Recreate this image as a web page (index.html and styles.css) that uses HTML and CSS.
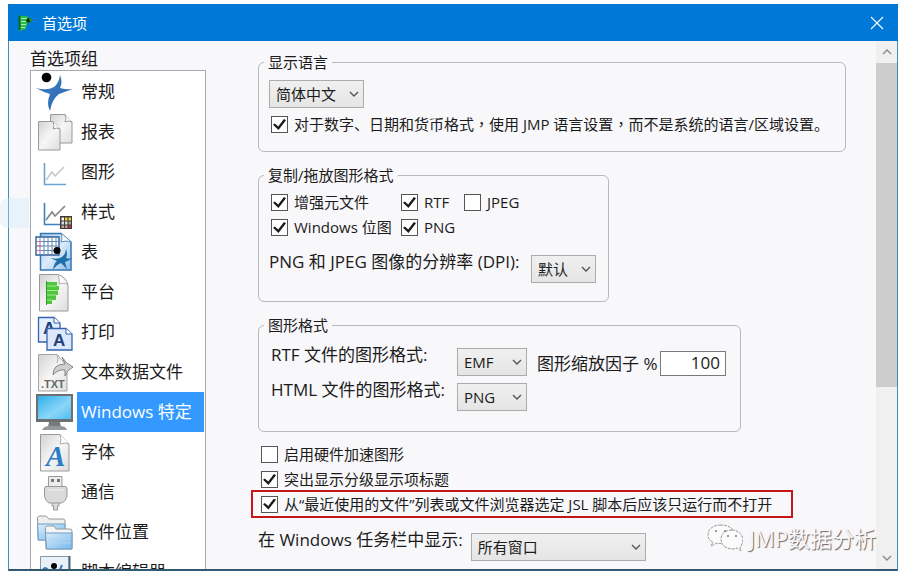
FILE: index.html
```html
<!DOCTYPE html>
<html lang="zh-CN">
<head>
<meta charset="utf-8">
<title>首选项</title>
<link rel="stylesheet" href="styles.css">
</head>
<body>
<svg class="defs" aria-hidden="true">
  <defs>
    <linearGradient id="paper" x1="0" y1="0" x2="1" y2="1"><stop offset="0" stop-color="#d2d2d2"/><stop offset=".5" stop-color="#f6f6f6"/><stop offset="1" stop-color="#dedede"/></linearGradient>
    <linearGradient id="bluepaper" x1="0" y1="0" x2="1" y2="1"><stop offset="0" stop-color="#9fc6ec"/><stop offset=".5" stop-color="#dcecfb"/><stop offset="1" stop-color="#8dbbe6"/></linearGradient>
    <linearGradient id="screen" x1="0" y1="0" x2="1" y2="1"><stop offset="0" stop-color="#2fb0ea"/><stop offset=".6" stop-color="#8bd6f8"/><stop offset="1" stop-color="#4cbcf0"/></linearGradient>
    <linearGradient id="folder" x1="0" y1="0" x2="1" y2="1"><stop offset="0" stop-color="#d8edfc"/><stop offset="1" stop-color="#7ab8ea"/></linearGradient>
    <linearGradient id="fig" x1="0" y1="0" x2="1" y2="1"><stop offset="0" stop-color="#3f7fc6"/><stop offset="1" stop-color="#2c66b0"/></linearGradient>
  </defs>
</svg>
<div class="window">
  <header class="titlebar">
    <svg class="app-icon" viewBox="0 0 16 18" aria-hidden="true"><path d="M2 1.500L11 2.500V5L13 6V9L10 9.500V12L9 12.500V15L3 17L2 16Z" fill="#2fb84c"/><path d="M2.500 1.500V16" stroke="#0b6b22" stroke-width="2"/><path d="M4 4.500H10M4 7.500H9M4 10.500H9M4 13.500H8" stroke="#a5efac"/><circle cx="11.500" cy="6.500" r="2.200" fill="#06360f"/><path d="M12 4.500L15 3.500V7L13 8" fill="#1c8f38"/></svg>
    <h1 class="title">首选项</h1>
    <button class="close" type="button" aria-label="关闭"><svg viewBox="0 0 14 14"><path d="M1 1L13 13M13 1L1 13" fill="none" stroke="#fff" stroke-width="1.100"/></svg></button>
  </header>
  <div class="content">
    <nav class="sidebar" aria-labelledby="groups">
      <h2 class="groups-title" id="groups">首选项组</h2>
      <ul class="groups">
        <li><button class="group" type="button"><svg viewBox="0 0 40 40"><circle cx="12.500" cy="5.500" r="4.800"/><path d="M2 16Q13 19 20 15Q25 11 26 3Q29 10 26 16Q32 18 39 17Q30 20 25 22Q18 27 16 39Q12 32 16 22Q9 20 2 16Z" fill="url(#fig)"/></svg><span>常规</span></button></li>
        <li><button class="group" type="button"><svg viewBox="0 0 40 40"><g fill="url(#paper)" stroke="#999"><path d="M16.500 2.500H31L38 10V31H16.500Z"/><path d="M31 2.500Q33 7 31 10Q35 8 38 10" fill="#fff"/><path d="M4.500 9.500H19L26 17V38H4.500Z"/><path d="M19 9.500Q21 14 19 17Q23 15 26 17" fill="#fff"/></g></svg><span>报表</span></button></li>
        <li><button class="group" type="button"><svg viewBox="0 0 40 40"><path d="M12 28L18 20L21 24L30 15" fill="none" stroke="#c3c8cc" stroke-width="1.500"/><path d="M10.500 11V32.500H32" fill="none" stroke="#6ba3d2" stroke-width="1.600"/></svg><span>图形</span></button></li>
        <li><button class="group" type="button"><svg viewBox="0 0 40 40"><path d="M12 28L18 20L21 24L31 14" fill="none" stroke="#888" stroke-width="1.700"/><path d="M10.500 11V32.500H28" fill="none" stroke="#3c80bd" stroke-width="1.600"/><path d="M26 24H38V37H26Z" fill="#403b39"/><path d="M27.500 25.500h2.500v3h-2.500z" fill="#fff"/><path d="M31 25.500h2.500v3H31zM34.500 25.500H37v3h-2.500z" fill="#e5d443"/><path d="M27.500 29.500H30v3h-2.500zM31 29.500h2.500v3H31z" fill="#ddd"/><path d="M34.500 29.500H37v3h-2.500z" fill="#a2a978"/><path d="M27.500 33.500H30V36h-2.500zM31 33.500h2.500V36H31z" fill="#b7a6a8"/><path d="M34.500 33.500H37V36h-2.500z" fill="#c83246"/></svg><span>样式</span></button></li>
        <li><button class="group" type="button"><svg viewBox="0 0 40 40"><path d="M6.500 1.500H27L37 10V38H6.500Z" fill="url(#bluepaper)" stroke="#3676b4" stroke-width="1.500"/><path d="M27 1.500Q29 6 27 10Q32 8 37 10" fill="#fff" stroke="#5c91c2"/><path d="M2 5H25V23H2Z" fill="#fff" stroke="#2f5f95" stroke-width="1.400"/><path d="M6 6V22M10 6V22M14 6V22M18 6V22M22 6V22M3 9.500H24M3 14H24M3 18.500H24" stroke="#5d86b5"/><path d="M3 9.500H8M3 14H8M3 18.500H8" stroke="#e26a8a"/><circle cx="23" cy="18.500" r="3.500"/><path d="M16 26Q24 28 28 25Q32 22 32 17Q34 22 32 26Q36 27 39 26Q34 29 31 30L33 37L27 31Q22 33 19 38Q20 31 23 29Z" fill="#1c6fa8"/></svg><span>表</span></button></li>
        <li><button class="group" type="button"><svg viewBox="0 0 40 40"><path d="M5.500 2.500H24Q32 5 34 13V39H5.500Z" fill="url(#paper)" stroke="#999"/><path d="M24 2.500Q26 9 25 12Q31 10 34 13" fill="#fff" stroke="#aaa"/><path d="M12 10H23V14H25V18H24V23H22V28H18V32H12Z" fill="#4cc83a"/><path d="M12 14H23M12 18.500H24M12 23H22M12 28H18" stroke="#a6eb96"/><path d="M12.500 9V33" stroke="#319a2b"/></svg><span>平台</span></button></li>
        <li><button class="group" type="button"><svg viewBox="0 0 40 40"><path d="M4.500 5.500H20L26 11V30H4.500Z" fill="#e4eefc" stroke="#3563ad" stroke-width="1.300"/><path d="M20 5.500V11H26" fill="#fff" stroke="#3563ad"/><text x="9" y="22" class="glyph-a">A</text><path d="M13 16.500H32L38 22V38H13Z" fill="#dbe8fb" stroke="#3563ad" stroke-width="1.300"/><path d="M32 16.500V22H38" fill="#fff" stroke="#3563ad"/><text x="19" y="34" class="glyph-a">A</text></svg><span>打印</span></button></li>
        <li><button class="group" type="button"><svg viewBox="0 0 40 40"><path d="M4.500 2.500H23L33 14V39H4.500Z" fill="url(#paper)" stroke="#a5a5a5"/><path d="M23 2.500Q25 7 23 11" fill="none" stroke="#aaa"/><path d="M19 23Q19 12 31 12L28 5Q32 12 39 15Q33 18 31 24V18Q24 17 19 23Z" fill="#cfcfcf" stroke="#858585"/><text x="7" y="36" class="glyph-txt">.TXT</text></svg><span>文本数据文件</span></button></li>
        <li><button class="group selected" type="button" aria-current="true"><svg viewBox="0 0 40 40"><path d="M2 2H39V30H2Z" fill="#6c7073"/><path d="M4 4H37V27H4Z" fill="url(#screen)"/><path d="M15 30H26L27 35H14Z" fill="#777b7e"/><path d="M8 38Q10 34 15 34H26Q32 34 33 38Z" fill="#94989a"/></svg><span>Windows 特定</span></button></li>
        <li><button class="group" type="button"><svg viewBox="0 0 40 40"><path d="M6.500 2.500H26L35 12V39H6.500Z" fill="url(#paper)" stroke="#999"/><path d="M26 2.500Q28 8 26 12Q31 10 35 12" fill="#fff" stroke="#aaa"/><text x="12" y="34" class="glyph-font">A</text></svg><span>字体</span></button></li>
        <li><button class="group" type="button"><svg viewBox="0 0 40 40"><g fill="#dadada" stroke="#999"><path d="M14.500 4.500H28V15H14.500Z" fill="#ececec"/><path d="M18 29H25V34H23.500V38H19.500V34H18Z"/><path d="M12 14.500H31Q33 14.500 33 17V24Q32 29 28 31H15Q11 29 10.500 24V17Q10.500 14.500 12 14.500Z"/></g><path d="M17 7h3v3h-3zM23 7h3v3h-3z" fill="#777"/><path d="M13 18H30" stroke="#eee"/></svg><span>通信</span></button></li>
        <li><button class="group" type="button"><svg viewBox="0 0 40 40"><path d="M3.500 7V5.500Q4 4 6 4H12L15 7H29Q31 7 31 9V28H4Z" fill="#eceeef" stroke="#999"/><path d="M3.500 12H31V28H4.500Z" fill="url(#folder)" stroke="#6f9fc5"/><path d="M11.500 17V15.500Q12 14 14 14H20L22 17H36Q38 17 38 19V37H12Z" fill="#f3f4f5" stroke="#999"/><path d="M11.500 21H38V37H12.500Z" fill="url(#folder)" stroke="#6f9fc5"/><path d="M14 27H36M14 31H36" stroke="#afd6f4"/></svg><span>文件位置</span></button></li>
        <li><button class="group" type="button"><svg viewBox="0 0 40 40"><path d="M6.500 4.500H35V39H6.500Z" fill="#e8f0f8" stroke="#8b98a5"/><path d="M35.500 4V39" stroke="#47627c" stroke-width="2"/><circle cx="20" cy="14" r="3"/><path d="M9 18Q11 14 14 18M25 20L28 13" fill="none" stroke="#3c79bb" stroke-width="2"/></svg><span>脚本编辑器</span></button></li>
      </ul>
    </nav>
    <main class="panel">
      <fieldset class="box language">
        <legend>显示语言</legend>
        <div class="picker picker-lang">
          <select aria-label="显示语言"><option>简体中文</option></select>
          <svg viewBox="0 0 10 6"><path d="M1 1L5 5L9 1"/></svg>
        </div>
        <label class="check"><input type="checkbox" checked><span>对于数字、日期和货币格式<span class="comma" lang="zh-TW">，</span>使用 JMP 语言设置<span class="comma" lang="zh-TW">，</span>而不是系统的语言/区域设置。</span></label>
      </fieldset>

      <fieldset class="box copy">
        <legend>复制/拖放图形格式</legend>
        <div class="formats">
          <label class="check"><input type="checkbox" checked><span>增强元文件</span></label>
          <label class="check"><input type="checkbox" checked><span>RTF</span></label>
          <label class="check"><input type="checkbox"><span>JPEG</span></label>
          <label class="check"><input type="checkbox" checked><span>Windows 位图</span></label>
          <label class="check"><input type="checkbox" checked><span>PNG</span></label>
        </div>
        <div class="row dpi">
          <label for="dpi">PNG 和 JPEG 图像的分辨率 (DPI):</label>
          <div class="picker picker-dpi">
            <select id="dpi"><option>默认</option></select>
            <svg viewBox="0 0 10 6"><path d="M1 1L5 5L9 1"/></svg>
          </div>
        </div>
      </fieldset>

      <fieldset class="box graphics">
        <legend>图形格式</legend>
        <div class="graphic-grid">
          <label for="rtf">RTF 文件的图形格式:</label>
          <div class="picker">
            <select id="rtf"><option>EMF</option></select>
            <svg viewBox="0 0 10 6"><path d="M1 1L5 5L9 1"/></svg>
          </div>
          <div class="scale">
            <label for="scale">图形缩放因子 %</label>
            <input id="scale" type="text" value="100">
          </div>
          <label for="html">HTML 文件的图形格式:</label>
          <div class="picker">
            <select id="html"><option>PNG</option></select>
            <svg viewBox="0 0 10 6"><path d="M1 1L5 5L9 1"/></svg>
          </div>
        </div>
      </fieldset>

      <div class="options">
        <label class="check"><input type="checkbox"><span>启用硬件加速图形</span></label>
        <label class="check"><input type="checkbox" checked><span>突出显示分级显示项标题</span></label>
        <label class="check marked"><input type="checkbox" checked><span>从“最近使用的文件”列表或文件浏览器选定 JSL 脚本后应该只运行而不打开</span></label>
      </div>
      <div class="row taskbar">
        <label for="taskbar">在 Windows 任务栏中显示:</label>
        <div class="picker picker-task">
          <select id="taskbar"><option>所有窗口</option></select>
          <svg viewBox="0 0 10 6"><path d="M1 1L5 5L9 1"/></svg>
        </div>
      </div>
    </main>
    <div class="scrollbar">
      <button type="button" aria-label="向上滚动"><svg viewBox="0 0 10 6"><path d="M1 5L5 1L9 5"/></svg></button>
      <div class="track"><div class="thumb"></div></div>
      <button type="button" aria-label="向下滚动"><svg viewBox="0 0 10 6"><path d="M1 1L5 5L9 1"/></svg></button>
    </div>
  </div>
</div>
<div class="side-tab" aria-hidden="true"></div>
<div class="watermark">
  <svg viewBox="0 0 36 28" aria-hidden="true"><g fill="#fbfbfc" stroke="#999" stroke-width="1" stroke-dasharray="3 1"><path d="M14 1C6 1 1 5 1 11C1 14 3 17 6 18L4 22L10 19Q13 20 17 19C23 19 27 15 27 10C27 5 22 1 14 1Z"/><path d="M25 6C18 6 14 10 14 15C14 21 19 25 26 25L30 24L34 27L33 23C35 21 36 18 36 15C35 10 31 6 25 6Z"/></g><g fill="#777"><circle cx="9" cy="7" r="1"/><circle cx="18" cy="7" r="1"/><circle cx="21" cy="12" r="1"/><circle cx="29" cy="12" r="1"/></g></svg>
  <span>JMP数据分析</span>
</div>
</body>
</html>
```
FILE: styles.css
```css
* { box-sizing: border-box; }

body {
  margin: 0;
  height: 100vh;
  padding: 4px 6px 6px 8px;
  position: relative;
  overflow: hidden;
  background: #fff;
  color: #1b1b1b;
  font: 15px/18px "Open Sans", "Noto Sans CJK SC", sans-serif;
}

button, input, select { font: inherit; color: inherit; }

button {
  margin: 0;
  padding: 0;
  border: 0;
  background: none;
}

.defs { position: absolute; width: 0; height: 0; }

.window {
  height: 100%;
  display: flex;
  flex-direction: column;
  border: solid #3d8fb9;
  border-width: 0 1px 2px;
  border-bottom-color: #315a72;
  background: #f8f7fa;
}

.titlebar {
  flex: none;
  height: 37px;
  margin: 0 -1px;
  padding: 0 14px 0 9px;
  display: flex;
  align-items: center;
  background: #0078d7;
  color: #fff;
}

.app-icon { width: 16px; height: 18px; margin-right: 9px; }

.title {
  flex: 1;
  margin: 0;
  font-size: 15px;
  font-weight: 400;
}

.close svg { display: block; width: 14px; height: 14px; }

.content {
  flex: 1;
  min-height: 0;
  display: flex;
}

.sidebar {
  flex: none;
  width: 197px;
  padding: 6px 0 0 21px;
  display: flex;
  flex-direction: column;
  font-size: 17px;
  line-height: 23px;
}

.groups-title {
  margin: 0;
  font-size: 17px;
  font-weight: 400;
}

.groups {
  flex: 1;
  min-height: 0;
  margin: 0;
  padding: 1px 0 0;
  overflow: hidden;
  list-style: none;
  border: 1px solid #a9a9ac;
  border-bottom: 0;
  background: #fff;
}

.group {
  width: 100%;
  height: 40px;
  padding: 0 1px 0 3px;
  display: flex;
  gap: 3px;
  text-align: left;
}

.group svg { flex: none; width: 40px; height: 40px; fill: #000; }

.group span {
  flex: 1;
  padding-left: 4px;
  line-height: 39px;
}

.selected span { background: #3399ff; color: #fff; }

.glyph-a { font: bold 17px "Liberation Sans", sans-serif; fill: #243f78; }
.glyph-txt { font: bold 11px "Liberation Sans", sans-serif; fill: #666; }
.glyph-font { font: italic bold 29px "Liberation Serif", serif; fill: #2f7cc9; }

.panel {
  flex: 1;
  min-width: 0;
  padding: 12px 30px 0 52px;
  overflow: hidden;
}

.box {
  min-width: 0;
  margin: 0 0 14px;
  padding: 0 10px 0 5px;
  border: 1px solid #b9b9bc;
  border-radius: 6px;
}

.box legend { padding: 0 4px; }

.language { height: 99px; }
.copy { width: 351px; height: 136px; }
.graphics { width: 483px; height: 116px; }

.picker { position: relative; width: 70px; }

.picker select {
  display: block;
  width: 100%;
  height: 28px;
  padding: 0 6px;
  appearance: none;
  border: 1px solid #acacac;
  border-radius: 0;
  background: linear-gradient(#f0f0f0, #e5e5e5);
}

.picker svg {
  position: absolute;
  top: 11px;
  right: 5px;
  width: 10px;
  height: 6px;
  pointer-events: none;
}

.picker path, .scrollbar path { fill: none; stroke: #555; stroke-width: 1.4; }

.picker-lang { width: 95px; margin: 9px 0 4px 5px; }
.picker-dpi { width: 65px; }
.picker-task { width: 175px; }

.check {
  display: flex;
  align-items: center;
  gap: 6px;
  height: 25px;
  white-space: nowrap;
}

.check > span { padding-bottom: 1px; }

.check input {
  flex: none;
  width: 17px;
  height: 17px;
  margin: 0;
  display: grid;
  place-content: center;
  appearance: none;
  border: 1px solid #555;
  background: #fff;
}

.check input:checked::before {
  content: "";
  width: 13px;
  height: 11px;
  background: #1b1b1b;
  clip-path: polygon(0 52%, 14% 40%, 40% 68%, 84% 0, 100% 12%, 42% 100%);
}

.language .check { margin-left: 7px; }
.comma { font-family: "Noto Sans CJK TC", sans-serif; }

.formats {
  display: grid;
  grid-template-columns: 130px 63px auto;
  padding: 6px 0 0 7px;
}

.row {
  display: flex;
  align-items: flex-start;
  font-size: 17px;
  line-height: 23px;
  white-space: nowrap;
}

.row select { font-size: 15px; }

.dpi { padding: 10px 2px 0 5px; justify-content: space-between; }
.row .picker { margin-top: 5px; }

.graphic-grid {
  display: grid;
  grid-template-columns: 186px 70px auto;
  row-gap: 2px;
  padding: 9px 0 0 7px;
  font-size: 17px;
  line-height: 23px;
  white-space: nowrap;
}

.graphic-grid .picker { margin-top: 5px; }
.graphic-grid .picker select { font-size: 15px; }

.scale {
  display: flex;
  align-items: center;
  justify-content: space-between;
  padding: 8px 4px 0 10px;
}

.scale input {
  width: 66px;
  height: 25px;
  padding: 0 5px 2px;
  border: 1px solid #7a7a7a;
  background: #fff;
  text-align: right;
}

.options { margin-top: -4px; padding-left: 3px; }

.marked {
  width: 542px;
  height: 28px;
  margin: -2px 0 0 -10px;
  padding-left: 8px;
  border: 2px solid #c4161c;
}

.taskbar { padding-top: 10px; gap: 8px; }

.scrollbar {
  flex: none;
  width: 21px;
  display: flex;
  flex-direction: column;
  background: #f0f0f0;
}

.scrollbar button {
  height: 22px;
  display: grid;
  place-items: center;
}

.scrollbar svg { width: 10px; height: 6px; }
.scrollbar path { stroke: #888; }
.track { flex: 1; }
.thumb { height: 67%; background: #cdcdcd; }

.side-tab {
  position: absolute;
  left: 0;
  top: 198px;
  width: 29px;
  height: 30px;
  border-radius: 8px 0 0 8px;
  background: rgba(205, 230, 245, 0.35);
}

.watermark {
  position: absolute;
  right: 28px;
  bottom: 24px;
  display: flex;
  align-items: center;
  gap: 6px;
  font-size: 22px;
  line-height: 30px;
  color: #f8f7fa;
  text-shadow: 1px 1px 1px #666;
}

.watermark svg { width: 36px; height: 28px; }
```
